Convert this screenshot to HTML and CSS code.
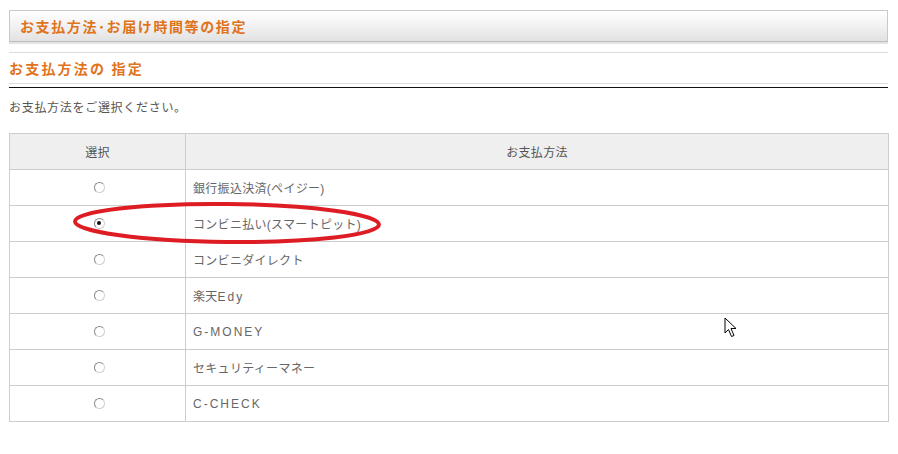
FILE: index.html
```html
<!DOCTYPE html>
<html lang="ja">
<head>
<meta charset="utf-8">
<title>お支払方法の指定</title>
<link rel="stylesheet" href="styles.css">
</head>
<body>
<div class="page">
  <div class="box-title">お支払方法･お届け時間等の指定</div>
  <div class="sec">
    <h2 class="sec-title">お支払方法の 指定</h2>
  </div>
  <div class="rule"></div>
  <p class="lead">お支払方法をご選択ください。</p>
  <table class="pay">
    <thead>
      <tr><th class="c-sel">選択</th><th>お支払方法</th></tr>
    </thead>
    <tbody>
      <tr><td class="c-sel"><span class="radio"></span></td><td>銀行振込決済(ペイジー)</td></tr>
      <tr><td class="c-sel"><span class="radio on"></span></td><td>コンビニ払い(スマートピット)</td></tr>
      <tr><td class="c-sel"><span class="radio"></span></td><td>コンビニダイレクト</td></tr>
      <tr><td class="c-sel"><span class="radio"></span></td><td>楽天<span class="en">Edy</span></td></tr>
      <tr><td class="c-sel"><span class="radio"></span></td><td><span class="en">G-MONEY</span></td></tr>
      <tr><td class="c-sel"><span class="radio"></span></td><td>セキュリティーマネー</td></tr>
      <tr><td class="c-sel"><span class="radio"></span></td><td><span class="en">C-CHECK</span></td></tr>
    </tbody>
  </table>
</div>
<svg class="mark" width="898" height="454" viewBox="0 0 898 454">
  <ellipse cx="227" cy="223" rx="152" ry="19" fill="none" stroke="#dd1c24" stroke-width="4" transform="rotate(0.6 227 223)"/>
</svg>
<svg class="cursor" width="14" height="21" viewBox="0 0 14 21">
  <path d="M1 1 L1 16 L4.5 12.5 L7.5 19.5 L10 18.5 L7 11.5 L12 11.5 Z" fill="#fff" stroke="#000" stroke-width="1" stroke-linejoin="miter"/>
</svg>
</body>
</html>
```
FILE: styles.css
```css
html, body {
  margin: 0;
  padding: 0;
  background: #fff;
}
body {
  font-family: "Noto Sans CJK JP", "Noto Sans", sans-serif;
  color: #333;
  position: relative;
  width: 898px;
  height: 454px;
  overflow: hidden;
}
.page {
  padding: 10px 10px 0 9px;
  width: 879px;
}
.box-title {
  height: 30px;
  border: 1px solid #c9c9c9;
  border-bottom-color: #bdbdbd;
  background: linear-gradient(#ffffff, #f3f3f3 45%, #e2e2e2);
  box-shadow: 0 2px 0 #e4e4e4;
  padding-left: 10px;
  font-size: 14px;
  font-weight: bold;
  letter-spacing: 1.6px;
  line-height: 30px;
  color: #e0731c;
}
.sec {
  margin-top: 10px;
  border-top: 1px solid #dcdcdc;
  border-bottom: 1px solid #dcdcdc;
  height: 30px;
}
.sec-title {
  margin: 0;
  font-size: 14px;
  font-weight: bold;
  letter-spacing: 2.2px;
  line-height: 30px;
  color: #e0731c;
}
.rule {
  margin-top: 3px;
  border-top: 1px solid #111;
}
.lead {
  margin: 10px 0 0;
  font-size: 12px;
  line-height: 18px;
  letter-spacing: 0.7px;
  color: #555;
}
.pay {
  margin-top: 17px;
  width: 880px;
  border-collapse: collapse;
  font-family: "Liberation Sans", "Noto Sans CJK JP", sans-serif;
  font-size: 12px;
  color: #666;
}
.pay th, .pay td {
  border: 1px solid #cdcdcd;
  height: 35px;
  padding: 0;
  letter-spacing: 0.3px;
}
.pay th {
  background: #efefef;
  font-weight: normal;
  color: #555;
  text-align: center;
}
.pay td {
  padding-left: 7px;
}
.pay .en {
  letter-spacing: 2px;
}
.pay .c-sel {
  width: 175px;
  text-align: center;
  padding-left: 0;
}
.radio {
  display: inline-block;
  width: 9px;
  height: 9px;
  border-radius: 50%;
  border: 1px solid #8a8a8a;
  border-right-color: #d0d0d0;
  border-bottom-color: #d0d0d0;
  background: #fff;
  vertical-align: middle;
  position: relative;
  margin-left: 3px;
  top: -1px;
}
.radio.on::after {
  content: "";
  position: absolute;
  left: 2.5px;
  top: 2.5px;
  width: 4px;
  height: 4px;
  border-radius: 50%;
  background: #111;
}
.mark {
  position: absolute;
  left: 0;
  top: 0;
  pointer-events: none;
}
.cursor {
  position: absolute;
  left: 724px;
  top: 317px;
}
```
